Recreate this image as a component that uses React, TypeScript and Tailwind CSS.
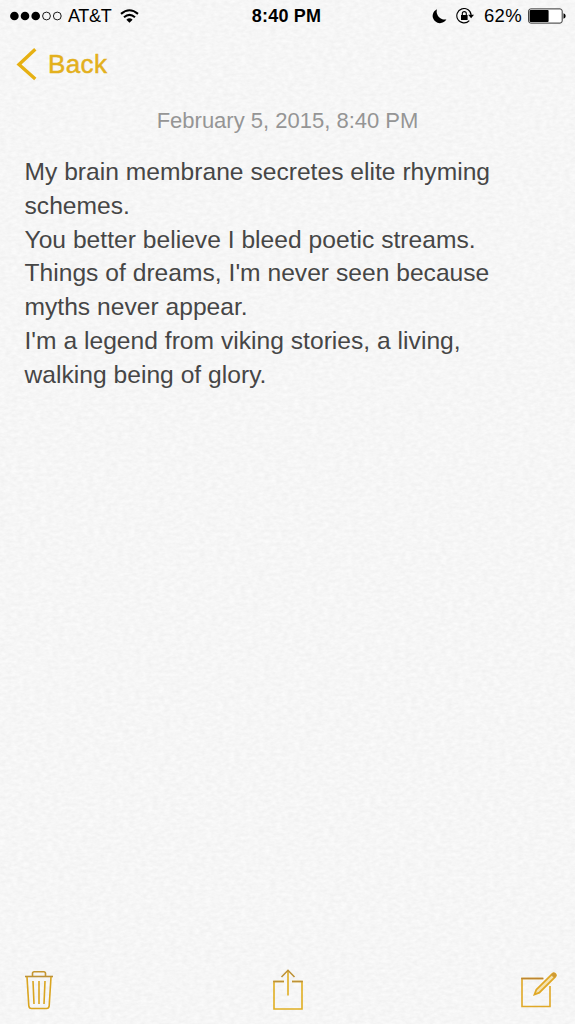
import React from "react";

const noteLines = [
  "My brain membrane secretes elite rhyming",
  "schemes.",
  "You better believe I bleed poetic streams.",
  "Things of dreams, I'm never seen because",
  "myths never appear.",
  "I'm a legend from viking stories, a living,",
  "walking being of glory.",
];

// Faint embossed paper grain behind the whole note
const PaperTexture = () => (
  <svg className="absolute inset-0 h-full w-full" aria-hidden="true">
    <filter id="paper" x="0" y="0" width="100%" height="100%" colorInterpolationFilters="sRGB">
      <feTurbulence
        type="fractalNoise"
        baseFrequency="0.17 0.3"
        numOctaves="3"
        seed="4"
        result="noise"
      />
      <feColorMatrix
        in="noise"
        type="matrix"
        values="0.055 0 0 0 0.937  0.055 0 0 0 0.937  0.055 0 0 0 0.937  0 0 0 0 1"
      />
    </filter>
    <rect width="100%" height="100%" filter="url(#paper)" />
  </svg>
);

const StatusBar = () => (
  <div className="grid h-8 grid-cols-3 items-center pr-[9px] pl-[10px] text-lg text-black">
    <div className="flex items-center">
      <svg className="h-4 w-[54px]" viewBox="0 0 54 16">
        <circle cx="4.4" cy="8" r="4.3" />
        <circle cx="15" cy="8" r="4.3" />
        <circle cx="25.7" cy="8" r="4.3" />
        <circle cx="36.5" cy="8" r="3.9" fill="none" stroke="#000" strokeWidth="0.9" />
        <circle cx="47.3" cy="8" r="3.9" fill="none" stroke="#000" strokeWidth="0.9" />
      </svg>
      <span className="ml-[4px] w-[44px] text-[18px] tracking-[-0.3px] whitespace-nowrap">
        AT&amp;T
      </span>
      <svg className="ml-2 h-[14px] w-[19px]" viewBox="0 0 19 14" fill="none" stroke="#000">
        <path d="M1 4.9Q9.5 -2.4 18 4.9" strokeWidth="2.1" />
        <path d="M4 8.2Q9.5 3.5 15 8.2" strokeWidth="2.1" />
        <path d="M6.4 10.7Q9.5 8 12.6 10.7L9.5 13.8Z" fill="#000" stroke="none" />
      </svg>
    </div>
    <div className="pr-[3px] text-center text-[18px] font-bold tracking-[0.2px]">8:40 PM</div>
    <div className="flex items-center justify-end">
      <svg className="h-4 w-[15px]" viewBox="0 0 15 16">
        <path d="M5 1.2A8 8 0 0 0 14.4 11.3A7.3 7.3 0 1 1 5 1.2Z" />
      </svg>
      <svg className="ml-[9px] h-4 w-[19px]" viewBox="0 0 19 16" fill="none" stroke="#000">
        <path d="M13.3 12.6A7.2 7.2 0 1 1 15.2 7.4" strokeWidth="1.1" />
        <path d="M12.2 6.8H18L15.1 10.3Z" fill="#000" stroke="none" />
        <rect x="5" y="7" width="6.6" height="5" fill="#000" stroke="none" />
        <path d="M6.3 7V5.6a2 2 0 0 1 4 0V7" strokeWidth="1.1" />
      </svg>
      <span className="ml-[9px] w-[39px] text-[18.5px] tracking-[0.3px]">62%</span>
      <svg className="ml-[5px] h-4 w-[38px]" viewBox="0 0 38 16">
        <rect x="0.6" y="0.9" width="33.6" height="14.2" rx="2.2" fill="#fff" stroke="#333" />
        <rect x="1.6" y="1.9" width="19" height="12.2" rx="1" />
        <path d="M35.5 5.3q2.2 .6 2.2 2.7t-2.2 2.7Z" />
      </svg>
    </div>
  </div>
);

const Toolbar = () => (
  <div className="mt-auto flex h-[56px] items-start justify-between pr-[18px] pl-6">
    <button aria-label="Delete">
      <svg className="h-[42px] w-[30px]" viewBox="0 0 30 42" fill="none" stroke="#daa520" strokeWidth="1.6">
        <path d="M1 8.5H29" stroke="#bd9136" />
        <path d="M8.5 8V5.4Q8.5 3.7 10.2 3.7H19.8Q21.5 3.7 21.5 5.4V8" stroke="#c59631" />
        <path d="M3 9L4.8 37.7Q5 40.5 7.5 40.5H22.5Q25 40.5 25.2 37.7L27 9" />
        <path d="M9 13L10 36M15 13V36M21 13L20 36" />
      </svg>
    </button>
    <button aria-label="Share">
      <svg className="h-[42px] w-[30px]" viewBox="0 0 30 42" fill="none" stroke="#e0ae22" strokeWidth="1.6">
        <path d="M11 13.5H1V41H29V13.5H19" />
        <path d="M11 13.5H.2M19 13.5H29.8" stroke="#bd9136" />
        <path d="M15 2.5V27.5" />
        <path d="M8.5 9L15 2.3L21.5 9" stroke="#bd9136" />
      </svg>
    </button>
    <button aria-label="Compose">
      <svg className="h-[42px] w-[36px]" viewBox="0 0 36 42" fill="none" stroke="#e0a826" strokeWidth="1.6">
        <path d="M22 10.5H1V38.5H29V18" />
        <path d="M.2 10.5H22.5" stroke="#bd8530" />
        <path d="M13.5 26.5L15.3 21.7L31.3 5.8Q32.8 4.4 34.2 5.8Q35.6 7.3 34.2 8.8L18.3 24.7Z" fill="#f4e2af" strokeWidth="1.8" />
        <path d="M30.4 6.8L33.2 9.6L34.4 8.4Q35.4 7.2 34.2 5.8Q32.8 4.6 31.4 5.8Z" fill="#cf9a35" stroke="#cf9a35" strokeWidth="1" />
      </svg>
    </button>
  </div>
);

export default function App() {
  return (
    <div className="relative h-screen w-full overflow-hidden bg-[#f6f6f6] font-['Liberation_Sans',Arial,sans-serif]">
      <PaperTexture />
      <div className="relative flex h-full flex-col">
        <StatusBar />
        <button className="mt-[14px] ml-4 flex h-9 items-center self-start text-[#e3b01d]">
          <svg className="h-[34px] w-[21px]" viewBox="0 0 21 34" fill="none" stroke="#e6b012">
            <path d="M19.3 2.2L3 17.5L19.3 32" strokeWidth="3.4" />
          </svg>
          <span className="ml-[11px] text-[26px] tracking-[0.4px] [-webkit-text-stroke:0.5px]">
            Back
          </span>
        </button>
        <div className="mt-[25px] text-center text-[22px] leading-7 text-[#959595]">
          February 5, 2015, 8:40 PM
        </div>
        <div className="mt-[20px] pl-[24.5px] text-[24.6px] leading-[33.8px] tracking-[0.02px] text-[#464646]">
          {noteLines.map((line) => (
            <p key={line} className="whitespace-nowrap">
              {line}
            </p>
          ))}
        </div>
        <Toolbar />
      </div>
    </div>
  );
}
